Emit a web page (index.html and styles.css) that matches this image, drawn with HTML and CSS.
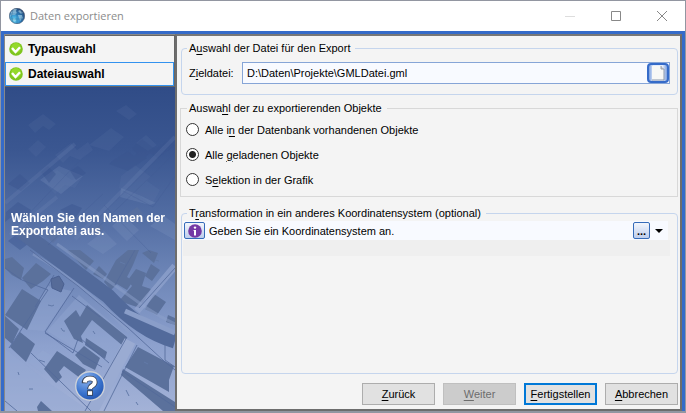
FILE: index.html
```html
<!DOCTYPE html>
<html lang="de">
<head>
<meta charset="utf-8">
<title>Daten exportieren</title>
<link rel="stylesheet" href="styles.css">
</head>
<body>
<div class="window">
  <header class="titlebar">
    <svg class="app-icon" viewBox="0 0 16 16" aria-hidden="true">
      <defs><radialGradient id="globe" cx=".3" cy=".75" r=".85"><stop offset="0" stop-color="#5fd4f5"/><stop offset=".5" stop-color="#2f84c4"/><stop offset="1" stop-color="#243b68"/></radialGradient></defs>
      <circle cx="8" cy="8" r="7.7" fill="url(#globe)" stroke="#46556b" stroke-width=".6"/>
      <path d="M2 4 5 1 8 1 7 3 8 5 6 7 3 7 1 9ZM9 3 11 2 14 5 12 6ZM9 7 13 7 14 10 11 13 10 10ZM3 11 6 10 7 13 5 14Z" fill="#b6dbe9" opacity=".6"/>
      <path d="M8 0v16M1 6h14M2 11h12M4 2q-3 6 0 12M12 2q3 6 0 12" fill="none" stroke="#28608e" stroke-width=".4"/>
    </svg>
    <h1 class="title">Daten exportieren</h1>
    <div class="controls">
      <button class="control faint" aria-label="Minimieren"><svg viewBox="0 0 10 10"><path d="M0 5.5h10"/></svg></button>
      <button class="control" aria-label="Maximieren"><svg viewBox="0 0 10 10"><path d="M.5.5h9v9h-9z"/></svg></button>
      <button class="control" aria-label="Schließen"><svg viewBox="0 0 10 10"><path d="M0 0 10 10M10 0 0 10"/></svg></button>
    </div>
  </header>
  <div class="frame">
    <aside class="sidebar">
      <ol class="steps">
        <li class="step">
          <svg class="check" viewBox="0 0 14 14" aria-hidden="true"><circle cx="7" cy="7" r="6.8" fill="#7fc51e"/><circle cx="7" cy="6" r="5" fill="#94d92b"/><path d="M3 6 6.5 10 11 5.2" fill="none" stroke="#fff" stroke-width="2.4"/></svg>
          Typauswahl
        </li>
        <li class="step current" aria-current="step">
          <svg class="check" viewBox="0 0 14 14" aria-hidden="true"><circle cx="7" cy="7" r="6.8" fill="#7fc51e"/><circle cx="7" cy="6" r="5" fill="#94d92b"/><path d="M3 6 6.5 10 11 5.2" fill="none" stroke="#fff" stroke-width="2.4"/></svg>
          Dateiauswahl
        </li>
      </ol>
      <div class="scene">
        <svg class="map" viewBox="5 87 170 324" preserveAspectRatio="xMidYMid slice" aria-hidden="true">
          <defs>
            <linearGradient id="sky" x1="0" y1="0" x2="0" y2="1"><stop offset="0" stop-color="#304c87"/><stop offset=".2" stop-color="#3b5791"/><stop offset=".4" stop-color="#526da3"/><stop offset=".6" stop-color="#7088b9"/><stop offset=".8" stop-color="#8da1ce"/><stop offset="1" stop-color="#a3b2d7"/></linearGradient>
          </defs>
          <path d="M5 87h170v324H5z" fill="url(#sky)"/>
          <!-- light lots -->
          <g fill="#94a7d1" opacity=".4">
            <path d="M48 286 72 291 44 331 21 329ZM79 295 128 337 109 369 47 331ZM5 349 52 385 90 411H5ZM43 350 57 359 43 374 28 362Z"/>
            <path opacity=".45" d="M40 180 59 166 83 176 61 194ZM121 188 139 195 156 203 150 205 120 197ZM87 244 104 231 117 244 103 254ZM112 226 124 216 139 230 127 241ZM14 235 27 225 44 238 32 248ZM150 226 164 216 175 224V240Z"/>
          </g>
          <!-- dim buildings in the upper part -->
          <g fill="#6a82b3" opacity=".13">
            <path d="M28 125 43 114 56 124 49 130 43 126 35 133ZM55 155 71 143 77 150 88 142 93 150 80 160 70 156 63 163ZM116 111 126 105 137 114 129 120ZM136 143 146 135 157 145 148 151ZM43 181 57 170 72 180 83 176 75 188 65 185 55 194ZM28 149 38 140 46 147 36 157Z"/>
            <path d="M89 145 111 128 124 137 109 151ZM121 176 135 165 151 177 147 181 160 190 152 205 137 194 131 198 119 188Z"/>
          </g>
          <g fill="#3a558d" opacity=".45">
            <path d="M8 184 20 174 30 183 21 191ZM109 164 116 158 124 163 138 153 147 158 128 171ZM132 148 142 139 155 149 168 141 175 145 158 158 150 153 142 160ZM41 172 48 166 56 174 49 183ZM117 158 128 151 138 160 128 168ZM70 171 78 166 86 173 76 180ZM6 212 18 202 31 210 27 218 15 214 5 222ZM60 210 72 204 82 208 75 219ZM8 241 17 234 28 244 20 250Z"/>
          </g>
          <!-- buildings and plots -->
          <g fill="#5b719c">
            <path opacity=".55" d="M90 231 99 223 104 228 97 236ZM127 214 137 207 143 213 135 220ZM58 223 67 217 72 222 64 229ZM45 235 54 229 60 236 53 243Z"/>
            <path d="M5 259 12 257 24 268 21 280 12 275 5 268ZM36 263 51 274 43 281 31 289 22 278ZM67 250H80L94 261 86 270ZM93 274 99 266 107 274 103 279ZM104 282 116 260 128 250H139L133 265 127 277 133 281 127 290 117 284 111 290ZM119 301 132 286 128 280 136 269 146 273 142 286 151 289 140 308ZM142 253 149 250 158 253 154 263ZM151 264 160 270 152 281 145 276ZM145 309 154 294 166 302 157 315ZM168 315 175 318V325L166 322Z"/>
            <path d="M22 289 41 301 27 330 5 315ZM5 316 19 329 12 344 5 338ZM20 332 35 344 26 362 10 347ZM64 321 76 310 80 317 87 305 127 337 123 346 92 320 81 336 83 343 74 339ZM86 338 107 352 105 359 85 345ZM75 355 84 346 100 358 95 370 83 364ZM44 369 57 351 86 370 80 378 64 366 59 372 62 377 56 383ZM37 407 41 401 52 411H38ZM138 347 174 366 169 380V392L125 367ZM123 369 175 402V411H163L121 375Z"/>
          </g>
          <!-- roads -->
          <path d="M33 254Q82 282 129 332M57 244 145 307Q160 317 175 324" fill="none" stroke="#8b9fca" stroke-width="3" opacity=".5"/>
          <path d="M22 232 108 296Q140 331 175 341" fill="none" stroke="#526a9b" stroke-width="15"/>
          <path d="M5 203 75 144M75 239 175 137M10 235 57 197" fill="none" stroke="#8197c2" stroke-width="4" opacity=".16"/>
          <path d="M137 311 175 266" fill="none" stroke="#91a4ce" stroke-width="7" opacity=".7"/>
          <path d="M130 341 92 411" fill="none" stroke="#9aabd2" stroke-width="12"/>
          <path d="M125 311 175 333" fill="none" stroke="#8a9ec9" stroke-width="5"/>
          <!-- parcel boundaries -->
          <path d="M30 250 78 286 127 327 164 361 175 370M5 268 22 280 48 290 9 348M54 275 35 307M74 288 45 332 73 353 78 339M72 296 100 317M80 338 109 363M45 333 102 367M31 353 91 411M5 401 17 411M127 337 85 411M137 345 104 411M122 371 175 407M165 345V360L175 367M135 250 115 285M139 308 175 268" fill="none" stroke="#536a9a" stroke-width=".8"/>
          <path d="M84 232 175 142M90 235 175 153M21 222 85 155M48 245 103 194M104 205 151 253M123 191 153 207 175 176" fill="none" stroke="#3f5a92" stroke-width=".7" opacity=".4"/>
          <path d="m51 279 8-3 5 8-3 8-9-4Z" fill="#566b98" stroke="#4a6090"/>
          <g fill="none" stroke="#627aa8"><path d="m48 305 4 1 2-1M61 328l2 3 2 0M93 331l2 3M39 360l6 2M18 372l1 3M29 389h4M126 390l3 6M136 402l2 3M144 362l4 2M120 262l5 2M155 260l4 1"/></g>
        </svg>
        <p class="hint">Wählen Sie den Namen der Exportdatei aus.</p>
        <button class="help" aria-label="Hilfe">
          <svg viewBox="0 0 30 30"><defs><radialGradient id="ball" cx=".35" cy=".25" r=".85"><stop offset="0" stop-color="#8eb4ed"/><stop offset=".6" stop-color="#3973ce"/><stop offset="1" stop-color="#204fa9"/></radialGradient></defs><circle cx="15" cy="15" r="14.3" fill="url(#ball)" stroke="#ccd0d8" stroke-width="1.4"/><path d="M9.6 12.2V10.8Q10.2 7.5 15 7.5T19.7 11Q19.7 13.4 17 14.9 15.1 16 15 18.3" fill="none" stroke="#333d50" stroke-width="5.6"/><path d="M12 19.3h6v5.4h-6z" fill="#333d50"/><path d="M9.8 11.5Q10.2 7.5 15 7.5T19.7 11Q19.7 13.4 17 14.9 15.1 16 15 17.8" fill="none" stroke="#fff" stroke-width="4"/><path d="M12.9 20.2H17.1v3.7h-4.2z" fill="#fff"/></svg>
        </button>
      </div>
    </aside>
    <main class="panel">
      <form class="form" onsubmit="return false">
        <fieldset class="group file">
          <legend>A<u>u</u>swahl der Datei für den Export</legend>
          <label for="target">Z<u>i</u>eldatei:</label>
          <div class="path-box">
            <input id="target" class="path" type="text" value="D:\Daten\Projekte\GMLDatei.gml">
            <button type="button" class="browse" aria-label="Datei wählen"><svg viewBox="0 0 14 16"><path d="M1 1h9l3 3v11H1z" fill="#f8f8f6"/><path d="M10 1v3h3" fill="#bfc4cc" stroke="#9aa0ab"/><path d="M13 4v11H1" fill="none" stroke="#8b98ad"/></svg></button>
          </div>
        </fieldset>
        <fieldset class="group objects">
          <legend>Auswa<u>h</u>l der zu exportierenden Objekte</legend>
          <label class="option"><input type="radio" name="objects"><span>Alle i<u>n</u> der Datenbank vorhandenen Objekte</span></label>
          <label class="option"><input type="radio" name="objects" checked><span>Alle <u>g</u>eladenen Objekte</span></label>
          <label class="option"><input type="radio" name="objects"><span>S<u>e</u>lektion in der Grafik</span></label>
        </fieldset>
        <fieldset class="group transform">
          <legend>T<u>r</u>ansformation in ein anderes Koordinatensystem (optional)</legend>
          <div class="crs">
            <button type="button" class="small info" aria-label="Information"><svg viewBox="0 0 14 14"><circle cx="7" cy="7" r="6.8" fill="#7439a5"/><circle cx="7" cy="3.6" r="1.2" fill="#fff"/><path d="M5.6 6h2.4v5.4H6V7h-.4z" fill="#fff"/></svg></button>
            <span class="crs-text">Geben Sie ein Koordinatensystem an.</span>
            <button type="button" class="small more" aria-label="Koordinatensystem wählen">...</button>
            <button type="button" class="drop" aria-label="Liste öffnen"><svg viewBox="0 0 8 4"><path d="M0 0h8L4 4z"/></svg></button>
          </div>
          <div class="strip"></div>
        </fieldset>
        <div class="actions">
          <button type="button" class="action"><u>Z</u>urück</button>
          <button type="button" class="action" disabled><u>W</u>eiter</button>
          <button type="submit" class="action primary"><u>F</u>ertigstellen</button>
          <button type="button" class="action"><u>A</u>bbrechen</button>
        </div>
      </form>
    </main>
  </div>
</div>
</body>
</html>
```
FILE: styles.css
```css
* { box-sizing: border-box; }
body {
  margin: 0;
  font: 11px/16px "Liberation Sans", Arial, sans-serif;
  color: #000;
}
button, input { font: inherit; color: inherit; }
button { padding: 0; }
u { text-underline-offset: 2px; text-decoration-thickness: 1px; }

.window {
  min-height: 100vh;
  display: flex;
  flex-direction: column;
  border: 1px solid #9296a1;
  border-bottom-width: 2px;
  background: #fff;
}
.titlebar {
  height: 30px;
  display: flex;
  align-items: center;
  padding-left: 8px;
  gap: 5px;
}
.app-icon { width: 16px; height: 16px; }
.title { margin: 0; flex: 1; font-size: 11px; font-weight: 400; font-family: "Open Sans", sans-serif; color: #8c8c8c; }
.controls { display: flex; }
.control {
  width: 46px;
  height: 28px;
  border: 0;
  background: none;
  display: grid;
  place-items: center;
}
.control svg { width: 10px; height: 10px; fill: none; stroke: #888; overflow: visible; }
.faint svg { stroke: #ddd; }

.frame {
  flex: 1;
  display: grid;
  grid-template-columns: 171px 1fr;
  border: solid #356bc9;
  border-width: 3px 3px 0;
}
.sidebar {
  display: flex;
  flex-direction: column;
  border: 1px solid #888;
  border-width: 1px 0 0 1px;
}
.steps { margin: 0; padding: 0; list-style: none; border: 1px solid #666; border-left: 0; background: #f4f4f4; }
.step {
  height: 26px;
  display: flex;
  align-items: center;
  gap: 5px;
  padding-left: 4px;
  font-size: 12px;
  font-weight: 700;
}
.step.current { height: 24px; border: 1px solid #3292ef; padding-left: 3px; }
.check { width: 14px; height: 14px; }
.scene { position: relative; flex: 1; display: flex; flex-direction: column; align-items: center; overflow: hidden; }
.map { position: absolute; inset: 0; width: 100%; height: 100%; }
.hint {
  position: relative;
  margin: 125px 0 0;
  padding: 0 4px 0 6px;
  width: 100%;
  font-size: 12px;
  line-height: 13px;
  font-weight: 700;
  color: #fff;
}
.help { position: relative; margin: auto 0 10px; width: 30px; height: 30px; border: 0; background: none; }
.help svg { display: block; }

.panel {
  border: 2px solid #6d6d6d;
  border-top-color: #777;
  background: #f4f4f4;
}
.form { display: flex; flex-direction: column; height: 100%; padding: 4px 2px 4px 3px; }
.group { margin: 0 0 0 1px; min-width: 0; border: 1px solid #c5d5ed; border-radius: 4px; padding: 0 7px 0 5px; }
legend { padding: 0 5px 0 2px; height: 16px; }
.file { display: flex; align-items: center; padding-top: 6px; padding-bottom: 10px; }
.file label { width: 55px; padding-left: 2px; }
.path-box { flex: 1; display: flex; height: 22px; border: 1px solid #86a5d7; background: #f8faff; }
.path { flex: 1; min-width: 0; border: 0; padding: 0 4px; background: none; outline: 0; }
.browse {
  width: 22px;
  height: 20px;
  border: 2px solid #356bc9;
  border-radius: 4px;
  background: linear-gradient(90deg, #7da0de, #e5edfc 25%, #e5edfc 75%, #7da0de);
  display: grid;
  place-items: center;
}
.browse svg { width: 14px; height: 16px; }

.objects { margin: 5px 0 0; border-color: #d8d8d8; border-radius: 0; padding: 1px 5px 4px; }
.objects legend { margin-left: 1px; }
.option { display: flex; align-items: center; gap: 6px; height: 25px; }
.option input {
  appearance: none;
  width: 13px;
  height: 13px;
  margin: 0;
  border: 1px solid #333;
  border-radius: 50%;
  background: #fff;
}
.option input:checked { background: radial-gradient(circle, #222 3px, #fff 4px); }

.transform { flex: 1; margin-top: 8px; padding-left: 1px; }
.transform legend { margin-left: 4px; }
.crs { display: flex; align-items: center; height: 19px; margin-right: 2px; padding-left: 1px; background: #f8faff; }
.small {
  display: grid;
  place-items: center;
  height: 17px;
  border: 1px solid #356bb9;
  border-radius: 2px;
  background: linear-gradient(#f3f6fc, #bdcdec);
}
.info { width: 21px; }
.info svg { width: 14px; height: 14px; }
.crs-text { flex: 1; padding-left: 4px; }
.more { width: 17px; line-height: 10px; font-weight: 700; }
.drop { width: 18px; height: 19px; border: 0; background: none; display: grid; place-items: center; }
.drop svg { width: 8px; height: 4px; }
.strip { height: 16px; background: #efefef; }

.actions { display: flex; justify-content: flex-end; gap: 8px; margin-top: 9px; }
.action { width: 73px; height: 22px; border: 1px solid #adadad; background: #e1e1e1; }
.action.primary { border: 2px solid #0078d7; }
.action:disabled { color: #6d6d6d; border-color: #bfbfbf; background: #ccc; }
```
